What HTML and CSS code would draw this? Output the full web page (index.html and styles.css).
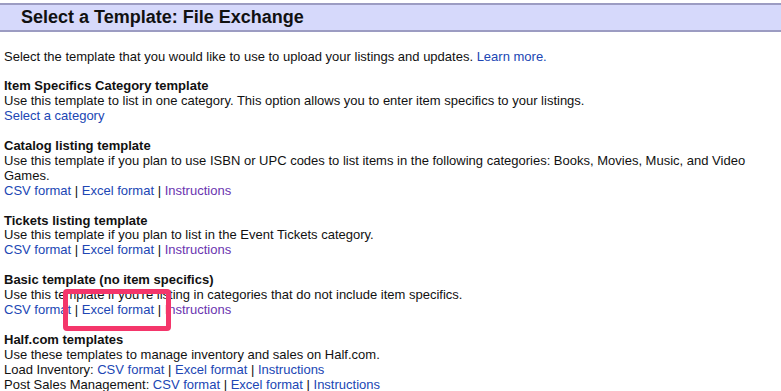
FILE: index.html
```html
<!DOCTYPE html>
<html>
<head>
<meta charset="utf-8">
<link rel="stylesheet" href="styles.css">
</head>
<body>
<div class="header"><h1>Select a Template: File Exchange</h1></div>
<div class="content">
  <p class="intro">Select the template that you would like to use to upload your listings and updates. <a href="#">Learn more.</a></p>
  <div class="section">
    <div class="title">Item Specifics Category template</div>
    <div>Use this template to list in one category. This option allows you to enter item specifics to your listings.</div>
    <div><a href="#">Select a category</a></div>
  </div>
  <div class="section">
    <div class="title">Catalog listing template</div>
    <div>Use this template if you plan to use ISBN or UPC codes to list items in the following categories: Books, Movies, Music, and Video Games.</div>
    <div><a href="#">CSV format</a> | <a href="#">Excel format</a> | <a class="visited" href="#">Instructions</a></div>
  </div>
  <div class="section">
    <div class="title">Tickets listing template</div>
    <div>Use this template if you plan to list in the Event Tickets category.</div>
    <div><a href="#">CSV format</a> | <a href="#">Excel format</a> | <a class="visited" href="#">Instructions</a></div>
  </div>
  <div class="section">
    <div class="title">Basic template (no item specifics)</div>
    <div>Use this template if you're listing in categories that do not include item specifics.</div>
    <div><a href="#">CSV format</a> | <a href="#">Excel format</a> | <a class="visited" href="#">Instructions</a></div>
  </div>
  <div class="section">
    <div class="title">Half.com templates</div>
    <div>Use these templates to manage inventory and sales on Half.com.</div>
    <div>Load Inventory: <a href="#">CSV format</a> | <a href="#">Excel format</a> | <a href="#">Instructions</a></div>
    <div>Post Sales Management: <a href="#">CSV format</a> | <a href="#">Excel format</a> | <a href="#">Instructions</a></div>
  </div>
</div>
<div class="highlight"></div>
</body>
</html>
```
FILE: styles.css
```css
html, body {
  margin: 0;
  padding: 0;
  background: #ffffff;
}
body {
  font-family: "Liberation Sans", Arial, sans-serif;
  font-size: 13px;
  line-height: 14.95px;
  color: #111111;
  padding-top: 3px;
  position: relative;
  overflow: hidden;
  height: 391px;
}
.header {
  background: #d6d9fb;
  border-top: 2px solid #9c9cc2;
  border-bottom: 2px solid #9c9cc2;
  height: 25px;
  padding-left: 21px;
}
.header h1 {
  margin: 0;
  font-size: 18px;
  line-height: 25px;
  font-weight: bold;
  color: #111111;
}
.content {
  padding: 0 4px;
}
.intro {
  margin: 18px 0 14px 0;
}
.section {
  margin-bottom: 14.95px;
}
.title {
  font-weight: bold;
}
a {
  color: #2046b4;
  text-decoration: none;
}
a.visited {
  color: #6a34b0;
}
.highlight {
  position: absolute;
  left: 63px;
  top: 289px;
  width: 98px;
  height: 32px;
  border: 5px solid #f4366b;
  border-radius: 4px;
}
```
